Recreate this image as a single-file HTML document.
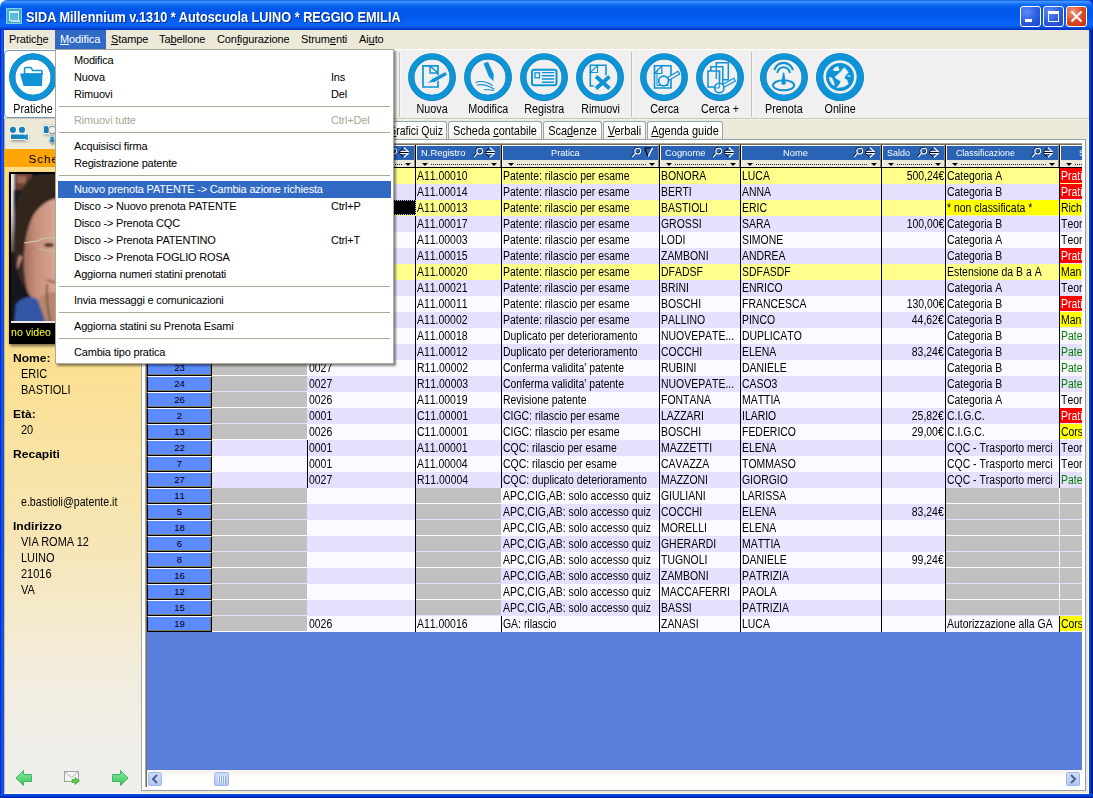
<!DOCTYPE html>
<html lang="it"><head><meta charset="utf-8"><title>SIDA Millennium</title>
<style>
*{box-sizing:border-box;margin:0;padding:0}
html,body{width:1093px;height:798px;overflow:hidden}
body{position:relative;background:#ece9d8;font-family:"Liberation Sans",sans-serif;font-size:11px;color:#000}
.abs{position:absolute}
/* window frame */
#frameL{left:0;top:30px;width:4px;height:768px;background:linear-gradient(90deg,#0019cf 0,#0831d9 1px,#166aee 2px,#0855dd 3px,#0540d8 4px)}
#frameR{left:1089px;top:30px;width:4px;height:768px;background:linear-gradient(90deg,#0a44e4 0,#0a3fe0 1px,#0530c8 2px,#001a98 3px,#001590 4px)}
#frameB{left:0;top:794px;width:1093px;height:4px;background:linear-gradient(180deg,#0540d8 0,#0855dd 1px,#0037d5 2px,#001ea0 4px)}
#title{left:0;top:0;width:1093px;height:30px;border-radius:7px 7px 0 0;
 background:linear-gradient(180deg,#0a55dd 0,#3f94ff 1.500px,#3088fc 2.500px,#1672f6 4px,#0a62f0 6px,#0058ea 9px,#0056e8 15px,#0860f4 21px,#0a65fa 25px,#0858ea 27px,#0440d0 28.500px,#0030bc 30px)}
#title .txt{left:26px;top:9px;color:#fff;font-weight:bold;font-size:14px;line-height:16px;white-space:nowrap;text-shadow:1px 1px 0 #0a2a80;transform:scaleX(.908);transform-origin:0 50%}
.tb{top:6px;width:21px;height:21px;border:1px solid #fff;border-radius:3px;background:radial-gradient(circle at 30% 25%,#5d8df5 0,#2b5be0 55%,#1c45c8 100%)}
.tb.x{background:radial-gradient(circle at 30% 25%,#f09a7c 0,#dc4a27 50%,#c22f10 100%)}
/* menubar */
#menubar{left:4px;top:30px;width:1085px;height:19px;background:#ece9d8}
.mi{position:absolute;top:0;height:19px;line-height:18px;font-size:11px;white-space:nowrap;letter-spacing:-0.1px}
.mi u{text-decoration:underline}
/* toolbar */
#toolbar{left:4px;top:49px;width:1085px;height:70px;background:#f0f0f0;border-top:1px solid #fff}
.ic{position:absolute;top:54px;width:47px;height:47px;border-radius:50%;border:6px solid #0e93d7;background:#fff;box-shadow:0 1px 0 #0a5f90}
.lbl{position:absolute;top:102px;width:70px;text-align:center;font-size:12.5px;line-height:14px;white-space:nowrap}
.lbl span{display:inline-block;transform:scaleX(.86)}
.sep{position:absolute;top:52px;width:2px;height:65px;border-left:1px solid #c5c2b0;border-right:1px solid #f8f8f8}
/* tabs */
.tab{position:absolute;top:121px;height:19px;border:1px solid #91a7b4;border-bottom-color:#d0cdc0;border-radius:3px 3px 0 0;background:linear-gradient(180deg,#fff 0,#fcfcfa 60%,#eeede4 100%);font-size:12.5px;line-height:17px;text-align:center;white-space:nowrap}
.tab span{position:absolute;left:-40px;right:-40px;top:1px;text-align:center;transform:scaleX(.875)}
/* grid */
#grid{left:147px;top:145px;width:935px;height:625px;background:#5a7edc;overflow:hidden}
.row{position:absolute;left:0;width:935px;height:16px}
.rh{position:absolute;left:0;top:0;width:65px;height:16px;background:#5b8bff;border:1px solid #000;border-top-color:#fff;border-left-color:#000;text-align:center;font-size:9.5px;line-height:13px;font-kerning:none;box-shadow:inset -1px -1px 0 #807860}
.c{position:absolute;top:0;height:16px;overflow:hidden;white-space:nowrap;font-size:12px;line-height:16px;padding-left:1px;font-kerning:none}
.c span{display:inline-block;transform:scaleX(.87);transform-origin:0 50%}
.c.r{text-align:right;padding:0 1px 0 0}
.c.r span{transform-origin:100% 50%}
.c.w{color:#fff}
.c.g{color:#008000}
.vs{position:absolute;top:0;width:1px;height:16px;background:#000}
.hc{position:absolute;top:0;height:22px}
.hc .bl{position:absolute;left:0;right:0;top:0;height:16px;background:#2a62b6;border-top:1px solid #fff;border-left:1px solid #fff;border-right:1px solid #8a8a80;color:#fff;font-size:9.7px;line-height:13px;white-space:nowrap;overflow:hidden}
.hc .fl{position:absolute;left:0;right:0;top:15px;height:7px;background:#ece9d8;border-left:1px solid #fff;border-right:1px solid #8a8a80}
.hc .fl:before{content:"";position:absolute;left:5px;top:3px;border:3px solid transparent;border-top:3px solid #000;border-bottom:0}
.hc .fl:after{content:"";position:absolute;right:3px;top:3px;border:3px solid transparent;border-top:3px solid #000;border-bottom:0}
.hc .dots{position:absolute;left:15px;right:13px;top:19px;height:1px;background:repeating-linear-gradient(90deg,#222 0,#222 1px,transparent 1px,transparent 2px)}
.hi{position:absolute;top:1px}
.mt{font-size:11px;line-height:17px;white-space:nowrap;letter-spacing:-0.19px}
.hv{position:absolute;top:0;width:1px;height:23px;background:#000}
</style></head><body>
<!-- title bar -->
<div class="abs" style="left:0;top:0;width:8px;height:8px;background:#fff"></div><div class="abs" style="left:1085px;top:0;width:8px;height:8px;background:#0831c8"></div>
<div id="title" class="abs">
 <div class="abs" style="left:6px;top:8px;width:16px;height:16px;background:#3fa8d0;border:1px solid #7fcce4"><div class="abs" style="left:2px;top:2px;width:10px;height:10px;border:1px solid #d8f0f8;border-top-width:2px;background:#5cbbdc"></div><div class="abs" style="left:4px;top:11px;width:9px;height:2px;background:#bfe6f2"></div></div>
 <div class="abs txt">SIDA Millennium v.1310 * Autoscuola LUINO * REGGIO EMILIA</div>
 <div class="abs tb" style="left:1020px"><div class="abs" style="left:4px;top:12px;width:7px;height:3px;background:#fff"></div></div>
 <div class="abs tb" style="left:1043px"><div class="abs" style="left:4px;top:4px;width:11px;height:11px;border:1px solid #fff;border-top-width:3px"></div></div>
 <div class="abs tb x" style="left:1066px"><svg class="abs" style="left:0;top:0" width="19" height="19" viewBox="0 0 19 19"><path d="M4.500 4.500L14.500 14.500M14.500 4.500L4.500 14.500" stroke="#fff" stroke-width="2.2"/></svg></div>
</div>
<div class="abs" style="left:4px;top:793px;width:1085px;height:1px;background:#fff"></div>
<div class="abs" style="left:1088px;top:30px;width:1px;height:764px;background:#fff"></div>
<div id="frameL" class="abs"></div><div id="frameR" class="abs"></div><div id="frameB" class="abs"></div>

<!-- menubar -->
<div id="menubar" class="abs">
 <span class="mi" style="left:5px">Pratic<u>h</u>e</span>
 <span class="mi" style="left:51px;width:51px;background:#316ac5;color:#fff;padding-left:5px"><u>M</u>odifica</span>
 <span class="mi" style="left:107px"><u>S</u>tampe</span>
 <span class="mi" style="left:155px">Ta<u>b</u>ellone</span>
 <span class="mi" style="left:213px">Con<u>f</u>igurazione</span>
 <span class="mi" style="left:297px">Strum<u>e</u>nti</span>
 <span class="mi" style="left:355px">Ai<u>u</u>to</span>
</div>

<!-- toolbar -->
<div id="toolbar" class="abs"></div>
<div class="abs" style="left:4px;top:118px;width:1085px;height:3px;background:linear-gradient(180deg,#cbc8b8 0,#cbc8b8 1px,#f2f0e6 1px,#f2f0e6 2px,#ece9d8 2px)"></div>
<div class="abs" style="left:4px;top:50px;width:56px;height:68px;background:#fff;border:1px solid #7a98af;border-radius:4px"></div>
<svg class="abs" style="left:9.100000000000001px;top:52.9px" width="48" height="49" viewBox="0 0 48 49"><circle cx="24" cy="24.300" r="20.700" fill="none" stroke="#0a5c8c" stroke-width="6"/><circle cx="24" cy="24" r="20.700" fill="none" stroke="#0e93d7" stroke-width="6"/><path d="M15.5 21V16Q15.5 14.500 17 14.500H21Q22.3 14.500 22.800 15.800L23.500 17.500H32Q33 17.500 33 18.500V21Z" fill="#fff" stroke="#0e93d7" stroke-width="1.5"/><path d="M11 20.500H33.500L33 33H14.500Z" fill="#0e93d7"/></svg><div class="lbl" style="left:-1.8999999999999986px"><span>Pratiche</span></div>
<svg class="abs" style="left:408.1px;top:52.9px" width="48" height="49" viewBox="0 0 48 49"><circle cx="24" cy="24.300" r="20.700" fill="none" stroke="#0a5c8c" stroke-width="6"/><circle cx="24" cy="24" r="20.700" fill="none" stroke="#0e93d7" stroke-width="6"/><path d="M15 12.800H30V34H15Z" fill="none" stroke="#0e93d7" stroke-width="1.7"/><path d="M22 12.800V20H30M22.500 13.500L29.500 19.500" fill="none" stroke="#0e93d7" stroke-width="1.5"/><path d="M19 30.300L24.500 25.300L37.500 18.500L39.500 22L26.500 29.500Z" fill="#0e93d7" stroke="#f0f0f0" stroke-width="1"/></svg><div class="lbl" style="left:397.1px"><span>Nuova</span></div>
<svg class="abs" style="left:464.1px;top:52.9px" width="48" height="49" viewBox="0 0 48 49"><circle cx="24" cy="24.300" r="20.700" fill="none" stroke="#0a5c8c" stroke-width="6"/><circle cx="24" cy="24" r="20.700" fill="none" stroke="#0e93d7" stroke-width="6"/><path d="M19.500 10.500L24 8.800L29.800 21.500L29.300 28.300L24.800 23.500Z" fill="#0e93d7"/><path d="M11.500 29.500Q17 27.500 22.500 29.500T28.500 33M13 32Q20 31 25 33.500T30.500 36M20 36.500Q25 36.500 30 37.500" stroke="#0e93d7" stroke-width="1.2" fill="none"/></svg><div class="lbl" style="left:453.1px"><span>Modifica</span></div>
<svg class="abs" style="left:520.1px;top:52.9px" width="48" height="49" viewBox="0 0 48 49"><circle cx="24" cy="24.300" r="20.700" fill="none" stroke="#0a5c8c" stroke-width="6"/><circle cx="24" cy="24" r="20.700" fill="none" stroke="#0e93d7" stroke-width="6"/><rect x="12" y="16.800" width="24.500" height="15.400" rx="2.200" fill="none" stroke="#0e93d7" stroke-width="2"/><rect x="15" y="19.800" width="4.500" height="5" fill="none" stroke="#0e93d7" stroke-width="1.300"/><path d="M21.800 19.600H34.200M21.800 22.800H34.200M21.800 26H34.200M21.800 29.200H34.200" stroke="#0e93d7" stroke-width="1.400"/></svg><div class="lbl" style="left:509.1px"><span>Registra</span></div>
<svg class="abs" style="left:576.3px;top:52.9px" width="48" height="49" viewBox="0 0 48 49"><circle cx="24" cy="24.300" r="20.700" fill="none" stroke="#0a5c8c" stroke-width="6"/><circle cx="24" cy="24" r="20.700" fill="none" stroke="#0e93d7" stroke-width="6"/><path d="M14.300 12.300H30V33H14.300Z" fill="none" stroke="#0e93d7" stroke-width="1.600"/><path d="M21.500 12.300L14.300 19.500H21.500Z" fill="none" stroke="#0e93d7" stroke-width="1.200"/><path d="M19.500 23.500L33.500 35.500M33.500 23.500L19.500 35.500" stroke="#f0f0f0" stroke-width="6.500"/><path d="M20 23.500L33.500 35.500M33.500 23.500L20 35.500" stroke="#0e93d7" stroke-width="3.800"/></svg><div class="lbl" style="left:565.3px"><span>Rimuovi</span></div>
<svg class="abs" style="left:640.2px;top:52.9px" width="48" height="49" viewBox="0 0 48 49"><circle cx="24" cy="24.300" r="20.700" fill="none" stroke="#0a5c8c" stroke-width="6"/><circle cx="24" cy="24" r="20.700" fill="none" stroke="#0e93d7" stroke-width="6"/><path d="M14.500 12.800H31V35H14.500Z" fill="none" stroke="#0e93d7" stroke-width="1.600"/><path d="M21.800 12.800L14.500 20.500H21.800Z" fill="none" stroke="#0e93d7" stroke-width="1.200"/><path d="M17 17.500V32.500H28.500" fill="none" stroke="#0e93d7" stroke-width="1"/><path d="M27.500 24.500L38 18.300L39.600 21L29 27.200Z" fill="#f0f0f0" stroke="#0e93d7" stroke-width="1.300"/><circle cx="23.600" cy="28" r="4.900" fill="#f0f0f0" stroke="#0e93d7" stroke-width="1.700"/></svg><div class="lbl" style="left:629.2px"><span>Cerca</span></div>
<svg class="abs" style="left:696.3px;top:52.9px" width="48" height="49" viewBox="0 0 48 49"><circle cx="24" cy="24.300" r="20.700" fill="none" stroke="#0a5c8c" stroke-width="6"/><circle cx="24" cy="24" r="20.700" fill="none" stroke="#0e93d7" stroke-width="6"/><path d="M20.300 9.800H32.300V26.800H20.300Z" fill="#f0f0f0" stroke="#0e93d7" stroke-width="1.500"/><path d="M14.800 13.700H26.800V31H14.800Z" fill="#f0f0f0" stroke="#0e93d7" stroke-width="1.500"/><path d="M12 18H23.500V34H12Z" fill="#f0f0f0" stroke="#0e93d7" stroke-width="1.500"/><path d="M20.300 13.700V26M23.500 18V27" stroke="#0e93d7" stroke-width="1.300"/><path d="M26.500 31.500L37.800 25.300L39.300 28L28 34.200Z" fill="#f0f0f0" stroke="#0e93d7" stroke-width="1.300"/><circle cx="23.300" cy="35" r="4.700" fill="#f0f0f0" stroke="#0e93d7" stroke-width="1.600"/><path d="M23.300 30.500V35H19" stroke="#0e93d7" stroke-width="1" fill="none"/></svg><div class="lbl" style="left:685.3px"><span>Cerca +</span></div>
<svg class="abs" style="left:760.2px;top:52.9px" width="48" height="49" viewBox="0 0 48 49"><circle cx="24" cy="24.300" r="20.700" fill="none" stroke="#0a5c8c" stroke-width="6"/><circle cx="24" cy="24" r="20.700" fill="none" stroke="#0e93d7" stroke-width="6"/><path d="M14.300 17Q17 9.800 23.600 9.800T33 17" fill="none" stroke="#0e93d7" stroke-width="2.200"/><path d="M17.300 20Q18.500 14.200 23.600 14.200T30 20" fill="none" stroke="#0e93d7" stroke-width="2"/><ellipse cx="23.600" cy="32.300" rx="10.600" ry="5" fill="none" stroke="#0e93d7" stroke-width="2"/><path d="M23 19.500H24.200L26 31Q23.600 32.500 21.200 31Z" fill="#0e93d7"/></svg><div class="lbl" style="left:749.2px"><span>Prenota</span></div>
<svg class="abs" style="left:816.3px;top:52.9px" width="48" height="49" viewBox="0 0 48 49"><circle cx="24" cy="24.300" r="20.700" fill="none" stroke="#0a5c8c" stroke-width="6"/><circle cx="24" cy="24" r="20.700" fill="none" stroke="#0e93d7" stroke-width="6"/><circle cx="24" cy="24" r="20.200" fill="#f0f0f0" stroke="#0e93d7" stroke-width="7.100"/><circle cx="24" cy="24" r="14" fill="#0e93d7"/><path d="M18.800 24.200L24.200 19.400L28.200 14.700L30.900 17.400L32.300 19.400L29.600 22.100L28.200 25.500L30.900 26.900L32.300 30.900L28.200 33.600L20.800 34.700L24.200 30.300L24.800 28.200L21.500 26.200Z" fill="#f2f2f2" stroke="#f2f2f2" stroke-width=".6" stroke-linejoin="round"/><path d="M16.700 16.700L19.400 14L22.100 13.300L23.500 17.400L20.800 18.100L18.100 18.100Z" fill="#f2f2f2"/><path d="M13 23.800L16 24.800L18.100 28.900L18.800 33L16 31.600L13.700 27.600Z" fill="#f2f2f2"/><path d="M31.300 22.100L34.700 22.800L34.700 23.800L31.600 23.200Z" fill="#f2f2f2"/></svg><div class="lbl" style="left:805.3px"><span>Online</span></div>
<div class="sep" style="left:399px"></div>
<div class="sep" style="left:631px"></div>
<div class="sep" style="left:751px"></div>

<!-- tabs -->
<div class="tab" style="left:384px;width:63px"><span style="transform:scaleX(.84)"><u>G</u>rafici Quiz</span></div>
<div class="tab" style="left:448px;width:94px"><span>Scheda <u>c</u>ontabile</span></div>
<div class="tab" style="left:543px;width:59px"><span>Sca<u>d</u>enze</span></div>
<div class="tab" style="left:603px;width:43px"><span><u>V</u>erbali</span></div>
<div class="tab" style="left:647px;width:76px"><span><u>A</u>genda guide</span></div>

<!-- left panel -->
<div class="abs" style="left:4px;top:119px;width:137px;height:30px;background:#ece9d8;border-left:1px solid #aaa798"></div>
<svg class="abs" style="left:6px;top:122px" width="28" height="24" viewBox="6 122 28 24"><defs><filter id="cg" x="-20%" y="-20%" width="140%" height="150%"><feGaussianBlur stdDeviation=".8"/></filter><linearGradient id="cb" x1="0" y1="0" x2="1" y2="0"><stop offset="0" stop-color="#1e7aae"/><stop offset="1" stop-color="#0e90cc"/></linearGradient></defs><g filter="url(#cg)" opacity=".55"><rect x="11.500" y="136" width="17" height="5.500" fill="#555"/></g><g fill="#f4f4f2" stroke="#f4f4f2" stroke-width="2.200" stroke-linejoin="round"><circle cx="13" cy="129.800" r="3.100"/><circle cx="22" cy="129.800" r="3.100"/><path d="M11 134.400H24.500L27.800 133.900V140.500L24.500 139H11Z"/></g><g fill="url(#cb)"><circle cx="13" cy="129.800" r="3.100"/><circle cx="22" cy="129.800" r="3.100"/><path d="M11 134.400H24.500V135.200L27.800 133.900V140.500L24.500 138.600V139H11Z"/></g></svg>
<svg class="abs" style="left:40px;top:122px" width="20" height="24" viewBox="40 122 20 24"><g filter="url(#cg)" opacity=".5"><path d="M50 138H55V141H57L53 145.500L48.500 141H50Z" fill="#444"/><rect x="44" y="133" width="14" height="2.500" fill="#555"/></g><rect x="43" y="124.800" width="16" height="9.600" fill="#f2f6f8" stroke="#b8d4e2" stroke-width=".8"/><rect x="44" y="126.200" width="4.200" height="6.800" fill="#1a7cb4"/><circle cx="52.200" cy="130" r="3.700" fill="#f0f0ee" stroke="#8a8a8a" stroke-width="1.100"/><path d="M50.200 136.500H54V140H55.500L52 143.300L48.500 140H50.200Z" fill="#1886c2" stroke="#e8f0f4" stroke-width=".5"/></svg>
<div class="abs" style="left:4px;top:149px;width:137px;height:18px;background:#ffa50a;font-size:11.5px;line-height:21px;padding-left:24.5px;letter-spacing:1.1px">Scheda</div>
<div class="abs" style="left:4px;top:167px;width:137px;height:626px;border-left:1px solid rgba(130,105,40,.35);background:linear-gradient(180deg,#fdde86 0,#fbdf90 30%,#f6e6b6 60%,#f2ecdc 80%,#f0eee8 92%,#efefec 100%)"></div>
<div class="abs" style="left:9px;top:172px;width:120px;height:172px;background:#000;box-shadow:1px 2px 3px rgba(0,0,0,.55)"></div>
<svg class="abs" style="left:11px;top:174px" width="116" height="147" viewBox="0 0 116 147"><defs><filter id="bl" x="-10%" y="-10%" width="120%" height="120%"><feGaussianBlur stdDeviation="1.3"/></filter><linearGradient id="sky" x1="0" y1="0" x2="0" y2="1"><stop offset="0" stop-color="#f4f4f8"/><stop offset=".5" stop-color="#d8d4da"/><stop offset="1" stop-color="#5a5058"/></linearGradient><linearGradient id="skin" x1="0" y1="0" x2="1" y2="0"><stop offset="0" stop-color="#a06c5a"/><stop offset=".12" stop-color="#c48e7a"/><stop offset=".3" stop-color="#d8a694"/><stop offset="1" stop-color="#ddb09a"/></linearGradient></defs><rect width="116" height="147" fill="#1d1a22"/><g filter="url(#bl)"><rect x="-2" y="-2" width="5" height="80" fill="url(#sky)"/><rect x="3" y="-2" width="18" height="18" fill="#6d4034"/><rect x="6" y="2" width="9" height="7" fill="#a06a5a"/><path d="M12 60C14 44 24 30 44 22H118V150H36C26 138 14 120 12 98Z" fill="url(#skin)"/><path d="M6 82C9 79 14 82 14 93C14 104 13 112 10 112C6 109 4 88 6 82Z" fill="#bd8874"/><path d="M20 4C40 -4 80 -2 118 6V24H50C38 24 28 32 22 42C17 52 14 64 13 80C10 77 6 81 6 96C2 88 2 60 4 40C6 24 12 10 20 4Z" fill="#30261f"/><path d="M13 80C13 92 13 104 16 116C12 112 8 104 6 96Z" fill="#3a2a26"/><path d="M-2 94H6C9 108 17 122 29 132L36 150H-2Z" fill="#14151f"/><path d="M5 130C11 124 19 120 27 126L35 150H3Z" fill="#3556a6"/><path d="M27 126C31 120 37 118 46 118V150H35Z" fill="#b8866e"/><path d="M36 110C35 122 36 134 40 150" stroke="#6a4438" stroke-width="1.600" fill="none"/><path d="M36 106Q42 109 50 108" stroke="#8a4a40" stroke-width="1.800" fill="none"/><ellipse cx="38" cy="71" rx="5" ry="2" fill="#3a2a22"/></g><path d="M13 69L26 67" stroke="#d8d8c8" stroke-width="1" fill="none" opacity=".9"/><path d="M26 67Q36 62 48 64" stroke="#c8c898" stroke-width="1.6" fill="none" opacity=".9"/><path d="M27 74Q36 79 48 76" stroke="#c8c8a0" stroke-width="1" fill="none" opacity=".7"/></svg>
<div class="abs" style="left:11px;top:321px;width:116px;height:2px;background:#e8e8e8"></div>
<div class="abs" style="left:11px;top:324px;width:60px;height:16px;color:#ffff30;font-size:11.5px;line-height:16px;transform:scaleX(.92);transform-origin:0 50%">no video</div>
<div class="abs" style="left:13px;top:351px;font-weight:bold;font-size:11.5px;line-height:14px;white-space:nowrap;transform:scaleX(1.05);transform-origin:0 50%">Nome:</div>
<div class="abs" style="left:21px;top:367px;font-size:12.5px;line-height:14px;white-space:nowrap;transform:scaleX(0.88);transform-origin:0 50%">ERIC</div>
<div class="abs" style="left:21px;top:383px;font-size:12.5px;line-height:14px;white-space:nowrap;transform:scaleX(0.88);transform-origin:0 50%">BASTIOLI</div>
<div class="abs" style="left:13px;top:407px;font-weight:bold;font-size:11.5px;line-height:14px;white-space:nowrap;transform:scaleX(1.05);transform-origin:0 50%">Età:</div>
<div class="abs" style="left:21px;top:423px;font-size:12.5px;line-height:14px;white-space:nowrap;transform:scaleX(0.88);transform-origin:0 50%">20</div>
<div class="abs" style="left:13px;top:447px;font-weight:bold;font-size:11.5px;line-height:14px;white-space:nowrap;transform:scaleX(1.05);transform-origin:0 50%">Recapiti</div>
<div class="abs" style="left:21px;top:495px;font-size:12.5px;line-height:14px;white-space:nowrap;transform:scaleX(0.85);transform-origin:0 50%">e.bastioli@patente.it</div>
<div class="abs" style="left:13px;top:519px;font-weight:bold;font-size:11.5px;line-height:14px;white-space:nowrap;transform:scaleX(1.05);transform-origin:0 50%">Indirizzo</div>
<div class="abs" style="left:21px;top:535px;font-size:12.5px;line-height:14px;white-space:nowrap;transform:scaleX(0.88);transform-origin:0 50%">VIA ROMA 12</div>
<div class="abs" style="left:21px;top:551px;font-size:12.5px;line-height:14px;white-space:nowrap;transform:scaleX(0.88);transform-origin:0 50%">LUINO</div>
<div class="abs" style="left:21px;top:567px;font-size:12.5px;line-height:14px;white-space:nowrap;transform:scaleX(0.88);transform-origin:0 50%">21016</div>
<div class="abs" style="left:21px;top:583px;font-size:12.5px;line-height:14px;white-space:nowrap;transform:scaleX(0.88);transform-origin:0 50%">VA</div>
<svg class="abs" style="left:15px;top:769px" width="18" height="18" viewBox="0 0 18 18"><defs><linearGradient id="gg" x1="0" y1="0" x2="0" y2="1"><stop offset="0" stop-color="#84ea9c"/><stop offset="1" stop-color="#40c65a"/></linearGradient></defs><path d="M1 9L8.5 1.5V5.5H16.500V12.5H8.5V16.5Z" fill="url(#gg)" stroke="#3cb860" stroke-width="1"/></svg>
<svg class="abs" style="left:111px;top:769px" width="18" height="18" viewBox="0 0 18 18"><path d="M17 9L9.5 1.5V5.5H1.500V12.5H9.5V16.5Z" fill="url(#gg)" stroke="#3cb860" stroke-width="1"/></svg>
<svg class="abs" style="left:63px;top:770px" width="18" height="16" viewBox="0 0 18 16"><rect x="1.5" y="1.500" width="14" height="10" fill="#f4f4f4" stroke="#a0a0a0"/><path d="M1.5 1.500L8.5 7.500L15.500 1.500" fill="none" stroke="#b0b0b0"/><path d="M9 9.500H12V7.500L16.500 11L12 14.500V12.500H9Z" fill="#5ccc3c" stroke="#2a9a2a" stroke-width=".6"/></svg>

<!-- grid frame -->
<div class="abs" style="left:141px;top:139px;width:945px;height:652px;background:#fff;border:1px solid #959e9e;border-top-color:#9aa6ac;border-left-color:#aaa89a"></div>
<div class="abs" style="left:145px;top:143px;width:937px;height:644px;border-left:1px solid #aca899;border-top:1px solid #aca899;background:#fff"></div>
<div class="abs" style="left:146px;top:144px;width:936px;height:643px;border-left:1px solid #716f64;border-top:1px solid #716f64;background:#fff"></div>
<div id="grid" class="abs">
<div class="hc" style="left:0px;width:65px"><div class="bl" style=""></div><div class="fl"></div><div class="dots"></div></div>
<i class="hv" style="left:65px"></i>
<div class="hc" style="left:65px;width:95px"><div class="bl" style=""><svg class="hi" style="right:16px" width="11" height="11" viewBox="0 0 11 11"><g fill="none" stroke="#000" stroke-width="1"><circle cx="5.9" cy="3.4" r="2.9"/><path d="M3.8 5.4L0.4 9.4"/></g><g fill="none" stroke="#fff" stroke-width="1.1"><circle cx="6.7" cy="4.1" r="2.9"/><path d="M4.6 6.2L1.2 10.2"/></g></svg><svg class="hi" style="right:5px" width="10" height="11" viewBox="0 0 10 11"><path d="M0.5 4.5L4.7 0.5M0.3 5.5H9.300M0.5 6.5L4.7 10.5" stroke="#000" stroke-width="1" fill="none"/><path d="M4.8 0.5L9.3 4.500H1.5M1.200 6.5H9.3L4.800 10.5" stroke="#fff" stroke-width="1.1" fill="none"/></svg></div><div class="fl"></div><div class="dots"></div></div>
<i class="hv" style="left:160px"></i>
<div class="hc" style="left:161px;width:107px"><div class="bl" style=""><svg class="hi" style="right:16px" width="11" height="11" viewBox="0 0 11 11"><g fill="none" stroke="#000" stroke-width="1"><circle cx="5.9" cy="3.4" r="2.9"/><path d="M3.8 5.4L0.4 9.4"/></g><g fill="none" stroke="#fff" stroke-width="1.1"><circle cx="6.7" cy="4.1" r="2.9"/><path d="M4.6 6.2L1.2 10.2"/></g></svg><svg class="hi" style="right:5px" width="10" height="11" viewBox="0 0 10 11"><path d="M0.5 4.5L4.7 0.5M0.3 5.5H9.300M0.5 6.5L4.7 10.5" stroke="#000" stroke-width="1" fill="none"/><path d="M4.8 0.5L9.3 4.500H1.5M1.200 6.5H9.3L4.800 10.5" stroke="#fff" stroke-width="1.1" fill="none"/></svg></div><div class="fl"></div><div class="dots"></div></div>
<i class="hv" style="left:268px"></i>
<div class="hc" style="left:269px;width:85px"><div class="bl" style=""><span style="position:absolute;left:4.4px;top:0;transform:scaleX(0.97);transform-origin:0 50%">N.Registro</span><svg class="hi" style="right:16px" width="11" height="11" viewBox="0 0 11 11"><g fill="none" stroke="#000" stroke-width="1"><circle cx="5.9" cy="3.4" r="2.9"/><path d="M3.8 5.4L0.4 9.4"/></g><g fill="none" stroke="#fff" stroke-width="1.1"><circle cx="6.7" cy="4.1" r="2.9"/><path d="M4.6 6.2L1.2 10.2"/></g></svg><svg class="hi" style="right:5px" width="10" height="11" viewBox="0 0 10 11"><path d="M0.5 4.5L4.7 0.5M0.3 5.5H9.300M0.5 6.5L4.7 10.5" stroke="#000" stroke-width="1" fill="none"/><path d="M4.8 0.5L9.3 4.500H1.5M1.200 6.5H9.3L4.800 10.5" stroke="#fff" stroke-width="1.1" fill="none"/></svg></div><div class="fl"></div><div class="dots"></div></div>
<i class="hv" style="left:354px"></i>
<div class="hc" style="left:355px;width:157px"><div class="bl" style=""><span style="position:absolute;left:48.3px;top:0;transform:scaleX(0.95);transform-origin:0 50%">Pratica</span><svg class="hi" style="right:16px" width="11" height="11" viewBox="0 0 11 11"><g fill="none" stroke="#000" stroke-width="1"><circle cx="5.9" cy="3.4" r="2.9"/><path d="M3.8 5.4L0.4 9.4"/></g><g fill="none" stroke="#fff" stroke-width="1.1"><circle cx="6.7" cy="4.1" r="2.9"/><path d="M4.6 6.2L1.2 10.2"/></g></svg><svg class="hi" style="right:5px" width="10" height="11" viewBox="0 0 10 11"><path d="M1.500 1H9M1.800 1L4.800 9.300" stroke="#000" stroke-width="1.200" fill="none"/><path d="M9.500 0.800L5.300 9.500" stroke="#fff" stroke-width="1.300" fill="none"/></svg></div><div class="fl"></div><div class="dots"></div></div>
<i class="hv" style="left:512px"></i>
<div class="hc" style="left:513px;width:80px"><div class="bl" style=""><span style="position:absolute;left:4.2px;top:0;transform:scaleX(0.96);transform-origin:0 50%">Cognome</span><svg class="hi" style="right:16px" width="11" height="11" viewBox="0 0 11 11"><g fill="none" stroke="#000" stroke-width="1"><circle cx="5.9" cy="3.4" r="2.9"/><path d="M3.8 5.4L0.4 9.4"/></g><g fill="none" stroke="#fff" stroke-width="1.1"><circle cx="6.7" cy="4.1" r="2.9"/><path d="M4.6 6.2L1.2 10.2"/></g></svg><svg class="hi" style="right:5px" width="10" height="11" viewBox="0 0 10 11"><path d="M0.5 4.5L4.7 0.5M0.3 5.5H9.300M0.5 6.5L4.7 10.5" stroke="#000" stroke-width="1" fill="none"/><path d="M4.8 0.5L9.3 4.500H1.5M1.200 6.5H9.3L4.800 10.5" stroke="#fff" stroke-width="1.1" fill="none"/></svg></div><div class="fl"></div><div class="dots"></div></div>
<i class="hv" style="left:593px"></i>
<div class="hc" style="left:594px;width:140px"><div class="bl" style=""><span style="position:absolute;left:41.3px;top:0;transform:scaleX(0.96);transform-origin:0 50%">Nome</span><svg class="hi" style="right:16px" width="11" height="11" viewBox="0 0 11 11"><g fill="none" stroke="#000" stroke-width="1"><circle cx="5.9" cy="3.4" r="2.9"/><path d="M3.8 5.4L0.4 9.4"/></g><g fill="none" stroke="#fff" stroke-width="1.1"><circle cx="6.7" cy="4.1" r="2.9"/><path d="M4.6 6.2L1.2 10.2"/></g></svg><svg class="hi" style="right:5px" width="10" height="11" viewBox="0 0 10 11"><path d="M0.5 4.5L4.7 0.5M0.3 5.5H9.300M0.5 6.5L4.7 10.5" stroke="#000" stroke-width="1" fill="none"/><path d="M4.8 0.5L9.3 4.500H1.5M1.200 6.5H9.3L4.800 10.5" stroke="#fff" stroke-width="1.1" fill="none"/></svg></div><div class="fl"></div><div class="dots"></div></div>
<i class="hv" style="left:734px"></i>
<div class="hc" style="left:735px;width:63px"><div class="bl" style=""><span style="position:absolute;left:4.0px;top:0;transform:scaleX(0.93);transform-origin:0 50%">Saldo</span><svg class="hi" style="right:16px" width="11" height="11" viewBox="0 0 11 11"><g fill="none" stroke="#000" stroke-width="1"><circle cx="5.9" cy="3.4" r="2.9"/><path d="M3.8 5.4L0.4 9.4"/></g><g fill="none" stroke="#fff" stroke-width="1.1"><circle cx="6.7" cy="4.1" r="2.9"/><path d="M4.6 6.2L1.2 10.2"/></g></svg><svg class="hi" style="right:5px" width="10" height="11" viewBox="0 0 10 11"><path d="M0.5 4.5L4.7 0.5M0.3 5.5H9.300M0.5 6.5L4.7 10.5" stroke="#000" stroke-width="1" fill="none"/><path d="M4.8 0.5L9.3 4.500H1.5M1.200 6.5H9.3L4.800 10.5" stroke="#fff" stroke-width="1.1" fill="none"/></svg></div><div class="fl"></div><div class="dots"></div></div>
<i class="hv" style="left:798px"></i>
<div class="hc" style="left:799px;width:113px"><div class="bl" style=""><span style="position:absolute;left:9.0px;top:0;transform:scaleX(0.91);transform-origin:0 50%">Classificazione</span><svg class="hi" style="right:16px" width="11" height="11" viewBox="0 0 11 11"><g fill="none" stroke="#000" stroke-width="1"><circle cx="5.9" cy="3.4" r="2.9"/><path d="M3.8 5.4L0.4 9.4"/></g><g fill="none" stroke="#fff" stroke-width="1.1"><circle cx="6.7" cy="4.1" r="2.9"/><path d="M4.6 6.2L1.2 10.2"/></g></svg><svg class="hi" style="right:5px" width="10" height="11" viewBox="0 0 10 11"><path d="M0.5 4.5L4.7 0.5M0.3 5.5H9.300M0.5 6.5L4.7 10.5" stroke="#000" stroke-width="1" fill="none"/><path d="M4.8 0.5L9.3 4.500H1.5M1.200 6.5H9.3L4.800 10.5" stroke="#fff" stroke-width="1.1" fill="none"/></svg></div><div class="fl"></div><div class="dots"></div></div>
<i class="hv" style="left:912px"></i>
<div class="hc" style="left:913px;width:100px"><div class="bl" style=""><span style="position:absolute;left:18.0px;top:0;transform:scaleX(0.95);transform-origin:0 50%">S</span></div><div class="fl"></div><div class="dots"></div></div>
<i class="hv" style="left:1013px"></i>
<div style="position:absolute;left:0;top:22px;width:935px;height:1px;background:#000"></div>
</div>
<div class="abs" style="left:147px;top:0;width:935px;height:798px;overflow:hidden">
<div style="position:absolute;left:0;top:0;width:935px;height:798px">
<div class="row" style="top:168px;background:#ffff8c">
<div class="rh"><span></span></div>
<div class="c " style="left:65px;width:95px;background:#c0c0c0;height:15px;"><span></span></div>
<div class="c " style="left:161px;width:107px;"><span></span></div>
<i class="vs" style="left:268px"></i>
<div class="c " style="left:269px;width:85px;"><span>A11.00010</span></div>
<i class="vs" style="left:354px"></i>
<div class="c " style="left:355px;width:157px;"><span>Patente: rilascio per esame</span></div>
<i class="vs" style="left:512px"></i>
<div class="c " style="left:513px;width:80px;"><span>BONORA</span></div>
<i class="vs" style="left:593px"></i>
<div class="c " style="left:594px;width:140px;"><span>LUCA</span></div>
<i class="vs" style="left:734px"></i>
<div class="c r" style="left:735px;width:63px;"><span>500,24€</span></div>
<i class="vs" style="left:798px"></i>
<div class="c " style="left:799px;width:113px;"><span>Categoria A</span></div>
<i class="vs" style="left:912px"></i>
<div class="c w" style="left:913px;width:23px;background:#ff0000;height:15px;"><span>Prati</span></div>
</div>
<div class="row" style="top:184px;background:#e6e0ff">
<div class="rh"><span></span></div>
<div class="c " style="left:65px;width:95px;background:#c0c0c0;height:15px;"><span></span></div>
<div class="c " style="left:161px;width:107px;"><span></span></div>
<i class="vs" style="left:268px"></i>
<div class="c " style="left:269px;width:85px;"><span>A11.00014</span></div>
<i class="vs" style="left:354px"></i>
<div class="c " style="left:355px;width:157px;"><span>Patente: rilascio per esame</span></div>
<i class="vs" style="left:512px"></i>
<div class="c " style="left:513px;width:80px;"><span>BERTI</span></div>
<i class="vs" style="left:593px"></i>
<div class="c " style="left:594px;width:140px;"><span>ANNA</span></div>
<i class="vs" style="left:734px"></i>
<div class="c r" style="left:735px;width:63px;"><span></span></div>
<i class="vs" style="left:798px"></i>
<div class="c " style="left:799px;width:113px;"><span>Categoria B</span></div>
<i class="vs" style="left:912px"></i>
<div class="c w" style="left:913px;width:23px;background:#ff0000;height:15px;"><span>Prati</span></div>
</div>
<div class="row" style="top:200px;background:#ffff8c">
<div class="rh"><span></span></div>
<div class="c " style="left:65px;width:95px;background:#c0c0c0;height:15px;"><span></span></div>
<div class="c " style="left:161px;width:107px;background:#000;height:15px;width:108px;border:1px dotted #a8bcff;"><span></span></div>
<div class="c " style="left:269px;width:85px;"><span>A11.00013</span></div>
<i class="vs" style="left:354px"></i>
<div class="c " style="left:355px;width:157px;"><span>Patente: rilascio per esame</span></div>
<i class="vs" style="left:512px"></i>
<div class="c " style="left:513px;width:80px;"><span>BASTIOLI</span></div>
<i class="vs" style="left:593px"></i>
<div class="c " style="left:594px;width:140px;"><span>ERIC</span></div>
<i class="vs" style="left:734px"></i>
<div class="c r" style="left:735px;width:63px;"><span></span></div>
<i class="vs" style="left:798px"></i>
<div class="c " style="left:799px;width:113px;background:#ffff00;height:15px;"><span>* non classificata *</span></div>
<i class="vs" style="left:912px"></i>
<div class="c " style="left:913px;width:23px;background:#ffff00;height:15px;"><span>Rich</span></div>
</div>
<div class="row" style="top:216px;background:#e6e0ff">
<div class="rh"><span></span></div>
<div class="c " style="left:65px;width:95px;background:#c0c0c0;height:15px;"><span></span></div>
<div class="c " style="left:161px;width:107px;"><span></span></div>
<i class="vs" style="left:268px"></i>
<div class="c " style="left:269px;width:85px;"><span>A11.00017</span></div>
<i class="vs" style="left:354px"></i>
<div class="c " style="left:355px;width:157px;"><span>Patente: rilascio per esame</span></div>
<i class="vs" style="left:512px"></i>
<div class="c " style="left:513px;width:80px;"><span>GROSSI</span></div>
<i class="vs" style="left:593px"></i>
<div class="c " style="left:594px;width:140px;"><span>SARA</span></div>
<i class="vs" style="left:734px"></i>
<div class="c r" style="left:735px;width:63px;"><span>100,00€</span></div>
<i class="vs" style="left:798px"></i>
<div class="c " style="left:799px;width:113px;"><span>Categoria B</span></div>
<i class="vs" style="left:912px"></i>
<div class="c " style="left:913px;width:23px;"><span>Teor</span></div>
</div>
<div class="row" style="top:232px;background:#fafaff">
<div class="rh"><span></span></div>
<div class="c " style="left:65px;width:95px;background:#c0c0c0;height:15px;"><span></span></div>
<div class="c " style="left:161px;width:107px;"><span></span></div>
<i class="vs" style="left:268px"></i>
<div class="c " style="left:269px;width:85px;"><span>A11.00003</span></div>
<i class="vs" style="left:354px"></i>
<div class="c " style="left:355px;width:157px;"><span>Patente: rilascio per esame</span></div>
<i class="vs" style="left:512px"></i>
<div class="c " style="left:513px;width:80px;"><span>LODI</span></div>
<i class="vs" style="left:593px"></i>
<div class="c " style="left:594px;width:140px;"><span>SIMONE</span></div>
<i class="vs" style="left:734px"></i>
<div class="c r" style="left:735px;width:63px;"><span></span></div>
<i class="vs" style="left:798px"></i>
<div class="c " style="left:799px;width:113px;"><span>Categoria A</span></div>
<i class="vs" style="left:912px"></i>
<div class="c " style="left:913px;width:23px;"><span>Teor</span></div>
</div>
<div class="row" style="top:248px;background:#e6e0ff">
<div class="rh"><span></span></div>
<div class="c " style="left:65px;width:95px;background:#c0c0c0;height:15px;"><span></span></div>
<div class="c " style="left:161px;width:107px;"><span></span></div>
<i class="vs" style="left:268px"></i>
<div class="c " style="left:269px;width:85px;"><span>A11.00015</span></div>
<i class="vs" style="left:354px"></i>
<div class="c " style="left:355px;width:157px;"><span>Patente: rilascio per esame</span></div>
<i class="vs" style="left:512px"></i>
<div class="c " style="left:513px;width:80px;"><span>ZAMBONI</span></div>
<i class="vs" style="left:593px"></i>
<div class="c " style="left:594px;width:140px;"><span>ANDREA</span></div>
<i class="vs" style="left:734px"></i>
<div class="c r" style="left:735px;width:63px;"><span></span></div>
<i class="vs" style="left:798px"></i>
<div class="c " style="left:799px;width:113px;"><span>Categoria B</span></div>
<i class="vs" style="left:912px"></i>
<div class="c w" style="left:913px;width:23px;background:#ff0000;height:15px;"><span>Prati</span></div>
</div>
<div class="row" style="top:264px;background:#ffff8c">
<div class="rh"><span></span></div>
<div class="c " style="left:65px;width:95px;background:#c0c0c0;height:15px;"><span></span></div>
<div class="c " style="left:161px;width:107px;"><span></span></div>
<i class="vs" style="left:268px"></i>
<div class="c " style="left:269px;width:85px;"><span>A11.00020</span></div>
<i class="vs" style="left:354px"></i>
<div class="c " style="left:355px;width:157px;"><span>Patente: rilascio per esame</span></div>
<i class="vs" style="left:512px"></i>
<div class="c " style="left:513px;width:80px;"><span>DFADSF</span></div>
<i class="vs" style="left:593px"></i>
<div class="c " style="left:594px;width:140px;"><span>SDFASDF</span></div>
<i class="vs" style="left:734px"></i>
<div class="c r" style="left:735px;width:63px;"><span></span></div>
<i class="vs" style="left:798px"></i>
<div class="c " style="left:799px;width:113px;"><span>Estensione da B a A</span></div>
<i class="vs" style="left:912px"></i>
<div class="c " style="left:913px;width:23px;background:#ffff00;height:15px;"><span>Man</span></div>
</div>
<div class="row" style="top:280px;background:#e6e0ff">
<div class="rh"><span></span></div>
<div class="c " style="left:65px;width:95px;background:#c0c0c0;height:15px;"><span></span></div>
<div class="c " style="left:161px;width:107px;"><span></span></div>
<i class="vs" style="left:268px"></i>
<div class="c " style="left:269px;width:85px;"><span>A11.00021</span></div>
<i class="vs" style="left:354px"></i>
<div class="c " style="left:355px;width:157px;"><span>Patente: rilascio per esame</span></div>
<i class="vs" style="left:512px"></i>
<div class="c " style="left:513px;width:80px;"><span>BRINI</span></div>
<i class="vs" style="left:593px"></i>
<div class="c " style="left:594px;width:140px;"><span>ENRICO</span></div>
<i class="vs" style="left:734px"></i>
<div class="c r" style="left:735px;width:63px;"><span></span></div>
<i class="vs" style="left:798px"></i>
<div class="c " style="left:799px;width:113px;"><span>Categoria A</span></div>
<i class="vs" style="left:912px"></i>
<div class="c " style="left:913px;width:23px;"><span>Teor</span></div>
</div>
<div class="row" style="top:296px;background:#fafaff">
<div class="rh"><span></span></div>
<div class="c " style="left:65px;width:95px;background:#c0c0c0;height:15px;"><span></span></div>
<div class="c " style="left:161px;width:107px;"><span></span></div>
<i class="vs" style="left:268px"></i>
<div class="c " style="left:269px;width:85px;"><span>A11.00011</span></div>
<i class="vs" style="left:354px"></i>
<div class="c " style="left:355px;width:157px;"><span>Patente: rilascio per esame</span></div>
<i class="vs" style="left:512px"></i>
<div class="c " style="left:513px;width:80px;"><span>BOSCHI</span></div>
<i class="vs" style="left:593px"></i>
<div class="c " style="left:594px;width:140px;"><span>FRANCESCA</span></div>
<i class="vs" style="left:734px"></i>
<div class="c r" style="left:735px;width:63px;"><span>130,00€</span></div>
<i class="vs" style="left:798px"></i>
<div class="c " style="left:799px;width:113px;"><span>Categoria B</span></div>
<i class="vs" style="left:912px"></i>
<div class="c w" style="left:913px;width:23px;background:#ff0000;height:15px;"><span>Prati</span></div>
</div>
<div class="row" style="top:312px;background:#e6e0ff">
<div class="rh"><span></span></div>
<div class="c " style="left:65px;width:95px;background:#c0c0c0;height:15px;"><span></span></div>
<div class="c " style="left:161px;width:107px;"><span></span></div>
<i class="vs" style="left:268px"></i>
<div class="c " style="left:269px;width:85px;"><span>A11.00002</span></div>
<i class="vs" style="left:354px"></i>
<div class="c " style="left:355px;width:157px;"><span>Patente: rilascio per esame</span></div>
<i class="vs" style="left:512px"></i>
<div class="c " style="left:513px;width:80px;"><span>PALLINO</span></div>
<i class="vs" style="left:593px"></i>
<div class="c " style="left:594px;width:140px;"><span>PINCO</span></div>
<i class="vs" style="left:734px"></i>
<div class="c r" style="left:735px;width:63px;"><span>44,62€</span></div>
<i class="vs" style="left:798px"></i>
<div class="c " style="left:799px;width:113px;"><span>Categoria B</span></div>
<i class="vs" style="left:912px"></i>
<div class="c " style="left:913px;width:23px;background:#ffff00;height:15px;"><span>Man</span></div>
</div>
<div class="row" style="top:328px;background:#fafaff">
<div class="rh"><span></span></div>
<div class="c " style="left:65px;width:95px;background:#c0c0c0;height:15px;"><span></span></div>
<div class="c " style="left:161px;width:107px;"><span></span></div>
<i class="vs" style="left:268px"></i>
<div class="c " style="left:269px;width:85px;"><span>A11.00018</span></div>
<i class="vs" style="left:354px"></i>
<div class="c " style="left:355px;width:157px;"><span>Duplicato per deterioramento</span></div>
<i class="vs" style="left:512px"></i>
<div class="c " style="left:513px;width:80px;"><span>NUOVEPATE...</span></div>
<i class="vs" style="left:593px"></i>
<div class="c " style="left:594px;width:140px;"><span>DUPLICATO</span></div>
<i class="vs" style="left:734px"></i>
<div class="c r" style="left:735px;width:63px;"><span></span></div>
<i class="vs" style="left:798px"></i>
<div class="c " style="left:799px;width:113px;"><span>Categoria B</span></div>
<i class="vs" style="left:912px"></i>
<div class="c g" style="left:913px;width:23px;"><span>Pate</span></div>
</div>
<div class="row" style="top:344px;background:#e6e0ff">
<div class="rh"><span></span></div>
<div class="c " style="left:65px;width:95px;background:#c0c0c0;height:15px;"><span></span></div>
<div class="c " style="left:161px;width:107px;"><span></span></div>
<i class="vs" style="left:268px"></i>
<div class="c " style="left:269px;width:85px;"><span>A11.00012</span></div>
<i class="vs" style="left:354px"></i>
<div class="c " style="left:355px;width:157px;"><span>Duplicato per deterioramento</span></div>
<i class="vs" style="left:512px"></i>
<div class="c " style="left:513px;width:80px;"><span>COCCHI</span></div>
<i class="vs" style="left:593px"></i>
<div class="c " style="left:594px;width:140px;"><span>ELENA</span></div>
<i class="vs" style="left:734px"></i>
<div class="c r" style="left:735px;width:63px;"><span>83,24€</span></div>
<i class="vs" style="left:798px"></i>
<div class="c " style="left:799px;width:113px;"><span>Categoria B</span></div>
<i class="vs" style="left:912px"></i>
<div class="c g" style="left:913px;width:23px;"><span>Pate</span></div>
</div>
<div class="row" style="top:360px;background:#fafaff">
<div class="rh"><span>23</span></div>
<div class="c " style="left:65px;width:95px;background:#c0c0c0;height:15px;"><span></span></div>
<div class="c " style="left:161px;width:107px;"><span>0027</span></div>
<i class="vs" style="left:268px"></i>
<div class="c " style="left:269px;width:85px;"><span>R11.00002</span></div>
<i class="vs" style="left:354px"></i>
<div class="c " style="left:355px;width:157px;"><span>Conferma validita' patente</span></div>
<i class="vs" style="left:512px"></i>
<div class="c " style="left:513px;width:80px;"><span>RUBINI</span></div>
<i class="vs" style="left:593px"></i>
<div class="c " style="left:594px;width:140px;"><span>DANIELE</span></div>
<i class="vs" style="left:734px"></i>
<div class="c r" style="left:735px;width:63px;"><span></span></div>
<i class="vs" style="left:798px"></i>
<div class="c " style="left:799px;width:113px;"><span>Categoria B</span></div>
<i class="vs" style="left:912px"></i>
<div class="c g" style="left:913px;width:23px;"><span>Pate</span></div>
</div>
<div class="row" style="top:376px;background:#e6e0ff">
<div class="rh"><span>24</span></div>
<div class="c " style="left:65px;width:95px;background:#c0c0c0;height:15px;"><span></span></div>
<div class="c " style="left:161px;width:107px;"><span>0027</span></div>
<i class="vs" style="left:268px"></i>
<div class="c " style="left:269px;width:85px;"><span>R11.00003</span></div>
<i class="vs" style="left:354px"></i>
<div class="c " style="left:355px;width:157px;"><span>Conferma validita' patente</span></div>
<i class="vs" style="left:512px"></i>
<div class="c " style="left:513px;width:80px;"><span>NUOVEPATE...</span></div>
<i class="vs" style="left:593px"></i>
<div class="c " style="left:594px;width:140px;"><span>CASO3</span></div>
<i class="vs" style="left:734px"></i>
<div class="c r" style="left:735px;width:63px;"><span></span></div>
<i class="vs" style="left:798px"></i>
<div class="c " style="left:799px;width:113px;"><span>Categoria B</span></div>
<i class="vs" style="left:912px"></i>
<div class="c g" style="left:913px;width:23px;"><span>Pate</span></div>
</div>
<div class="row" style="top:392px;background:#fafaff">
<div class="rh"><span>26</span></div>
<div class="c " style="left:65px;width:95px;background:#c0c0c0;height:15px;"><span></span></div>
<div class="c " style="left:161px;width:107px;"><span>0026</span></div>
<i class="vs" style="left:268px"></i>
<div class="c " style="left:269px;width:85px;"><span>A11.00019</span></div>
<i class="vs" style="left:354px"></i>
<div class="c " style="left:355px;width:157px;"><span>Revisione patente</span></div>
<i class="vs" style="left:512px"></i>
<div class="c " style="left:513px;width:80px;"><span>FONTANA</span></div>
<i class="vs" style="left:593px"></i>
<div class="c " style="left:594px;width:140px;"><span>MATTIA</span></div>
<i class="vs" style="left:734px"></i>
<div class="c r" style="left:735px;width:63px;"><span></span></div>
<i class="vs" style="left:798px"></i>
<div class="c " style="left:799px;width:113px;"><span>Categoria A</span></div>
<i class="vs" style="left:912px"></i>
<div class="c " style="left:913px;width:23px;"><span>Teor</span></div>
</div>
<div class="row" style="top:408px;background:#e6e0ff">
<div class="rh"><span>2</span></div>
<div class="c " style="left:65px;width:95px;background:#c0c0c0;height:15px;"><span></span></div>
<div class="c " style="left:161px;width:107px;"><span>0001</span></div>
<i class="vs" style="left:268px"></i>
<div class="c " style="left:269px;width:85px;"><span>C11.00001</span></div>
<i class="vs" style="left:354px"></i>
<div class="c " style="left:355px;width:157px;"><span>CIGC: rilascio per esame</span></div>
<i class="vs" style="left:512px"></i>
<div class="c " style="left:513px;width:80px;"><span>LAZZARI</span></div>
<i class="vs" style="left:593px"></i>
<div class="c " style="left:594px;width:140px;"><span>ILARIO</span></div>
<i class="vs" style="left:734px"></i>
<div class="c r" style="left:735px;width:63px;"><span>25,82€</span></div>
<i class="vs" style="left:798px"></i>
<div class="c " style="left:799px;width:113px;"><span>C.I.G.C.</span></div>
<i class="vs" style="left:912px"></i>
<div class="c w" style="left:913px;width:23px;background:#ff0000;height:15px;"><span>Prati</span></div>
</div>
<div class="row" style="top:424px;background:#fafaff">
<div class="rh"><span>13</span></div>
<div class="c " style="left:65px;width:95px;background:#c0c0c0;height:15px;"><span></span></div>
<div class="c " style="left:161px;width:107px;"><span>0026</span></div>
<i class="vs" style="left:268px"></i>
<div class="c " style="left:269px;width:85px;"><span>C11.00001</span></div>
<i class="vs" style="left:354px"></i>
<div class="c " style="left:355px;width:157px;"><span>CIGC: rilascio per esame</span></div>
<i class="vs" style="left:512px"></i>
<div class="c " style="left:513px;width:80px;"><span>BOSCHI</span></div>
<i class="vs" style="left:593px"></i>
<div class="c " style="left:594px;width:140px;"><span>FEDERICO</span></div>
<i class="vs" style="left:734px"></i>
<div class="c r" style="left:735px;width:63px;"><span>29,00€</span></div>
<i class="vs" style="left:798px"></i>
<div class="c " style="left:799px;width:113px;"><span>C.I.G.C.</span></div>
<i class="vs" style="left:912px"></i>
<div class="c " style="left:913px;width:23px;background:#ffff00;height:15px;"><span>Cors</span></div>
</div>
<div class="row" style="top:440px;background:#e6e0ff">
<div class="rh"><span>22</span></div>
<div class="c " style="left:65px;width:95px;"><span></span></div>
<i class="vs" style="left:160px"></i>
<div class="c " style="left:161px;width:107px;"><span>0001</span></div>
<i class="vs" style="left:268px"></i>
<div class="c " style="left:269px;width:85px;"><span>A11.00001</span></div>
<i class="vs" style="left:354px"></i>
<div class="c " style="left:355px;width:157px;"><span>CQC: rilascio per esame</span></div>
<i class="vs" style="left:512px"></i>
<div class="c " style="left:513px;width:80px;"><span>MAZZETTI</span></div>
<i class="vs" style="left:593px"></i>
<div class="c " style="left:594px;width:140px;"><span>ELENA</span></div>
<i class="vs" style="left:734px"></i>
<div class="c r" style="left:735px;width:63px;"><span></span></div>
<i class="vs" style="left:798px"></i>
<div class="c " style="left:799px;width:113px;"><span>CQC - Trasporto merci</span></div>
<i class="vs" style="left:912px"></i>
<div class="c " style="left:913px;width:23px;"><span>Teor</span></div>
</div>
<div class="row" style="top:456px;background:#fafaff">
<div class="rh"><span>7</span></div>
<div class="c " style="left:65px;width:95px;"><span></span></div>
<i class="vs" style="left:160px"></i>
<div class="c " style="left:161px;width:107px;"><span>0001</span></div>
<i class="vs" style="left:268px"></i>
<div class="c " style="left:269px;width:85px;"><span>A11.00004</span></div>
<i class="vs" style="left:354px"></i>
<div class="c " style="left:355px;width:157px;"><span>CQC: rilascio per esame</span></div>
<i class="vs" style="left:512px"></i>
<div class="c " style="left:513px;width:80px;"><span>CAVAZZA</span></div>
<i class="vs" style="left:593px"></i>
<div class="c " style="left:594px;width:140px;"><span>TOMMASO</span></div>
<i class="vs" style="left:734px"></i>
<div class="c r" style="left:735px;width:63px;"><span></span></div>
<i class="vs" style="left:798px"></i>
<div class="c " style="left:799px;width:113px;"><span>CQC - Trasporto merci</span></div>
<i class="vs" style="left:912px"></i>
<div class="c " style="left:913px;width:23px;"><span>Teor</span></div>
</div>
<div class="row" style="top:472px;background:#e6e0ff">
<div class="rh"><span>27</span></div>
<div class="c " style="left:65px;width:95px;"><span></span></div>
<i class="vs" style="left:160px"></i>
<div class="c " style="left:161px;width:107px;"><span>0027</span></div>
<i class="vs" style="left:268px"></i>
<div class="c " style="left:269px;width:85px;"><span>R11.00004</span></div>
<i class="vs" style="left:354px"></i>
<div class="c " style="left:355px;width:157px;"><span>CQC: duplicato deterioramento</span></div>
<i class="vs" style="left:512px"></i>
<div class="c " style="left:513px;width:80px;"><span>MAZZONI</span></div>
<i class="vs" style="left:593px"></i>
<div class="c " style="left:594px;width:140px;"><span>GIORGIO</span></div>
<i class="vs" style="left:734px"></i>
<div class="c r" style="left:735px;width:63px;"><span></span></div>
<i class="vs" style="left:798px"></i>
<div class="c " style="left:799px;width:113px;"><span>CQC - Trasporto merci</span></div>
<i class="vs" style="left:912px"></i>
<div class="c g" style="left:913px;width:23px;"><span>Pate</span></div>
</div>
<div class="row" style="top:488px;background:#fafaff">
<div class="rh"><span>11</span></div>
<div class="c " style="left:65px;width:95px;background:#c0c0c0;height:15px;"><span></span></div>
<div class="c " style="left:161px;width:107px;"><span></span></div>
<i class="vs" style="left:268px"></i>
<div class="c " style="left:269px;width:85px;background:#c0c0c0;height:15px;"><span></span></div>
<div class="c " style="left:355px;width:157px;"><span>APC,CIG,AB: solo accesso quiz</span></div>
<i class="vs" style="left:512px"></i>
<div class="c " style="left:513px;width:80px;"><span>GIULIANI</span></div>
<i class="vs" style="left:593px"></i>
<div class="c " style="left:594px;width:140px;"><span>LARISSA</span></div>
<i class="vs" style="left:734px"></i>
<div class="c r" style="left:735px;width:63px;"><span></span></div>
<i class="vs" style="left:798px"></i>
<div class="c " style="left:799px;width:113px;background:#c0c0c0;height:15px;"><span></span></div>
<div class="c " style="left:913px;width:23px;background:#c0c0c0;height:15px;"><span></span></div>
</div>
<div class="row" style="top:504px;background:#e6e0ff">
<div class="rh"><span>5</span></div>
<div class="c " style="left:65px;width:95px;background:#c0c0c0;height:15px;"><span></span></div>
<div class="c " style="left:161px;width:107px;"><span></span></div>
<i class="vs" style="left:268px"></i>
<div class="c " style="left:269px;width:85px;background:#c0c0c0;height:15px;"><span></span></div>
<div class="c " style="left:355px;width:157px;"><span>APC,CIG,AB: solo accesso quiz</span></div>
<i class="vs" style="left:512px"></i>
<div class="c " style="left:513px;width:80px;"><span>COCCHI</span></div>
<i class="vs" style="left:593px"></i>
<div class="c " style="left:594px;width:140px;"><span>ELENA</span></div>
<i class="vs" style="left:734px"></i>
<div class="c r" style="left:735px;width:63px;"><span>83,24€</span></div>
<i class="vs" style="left:798px"></i>
<div class="c " style="left:799px;width:113px;background:#c0c0c0;height:15px;"><span></span></div>
<div class="c " style="left:913px;width:23px;background:#c0c0c0;height:15px;"><span></span></div>
</div>
<div class="row" style="top:520px;background:#fafaff">
<div class="rh"><span>18</span></div>
<div class="c " style="left:65px;width:95px;background:#c0c0c0;height:15px;"><span></span></div>
<div class="c " style="left:161px;width:107px;"><span></span></div>
<i class="vs" style="left:268px"></i>
<div class="c " style="left:269px;width:85px;background:#c0c0c0;height:15px;"><span></span></div>
<div class="c " style="left:355px;width:157px;"><span>APC,CIG,AB: solo accesso quiz</span></div>
<i class="vs" style="left:512px"></i>
<div class="c " style="left:513px;width:80px;"><span>MORELLI</span></div>
<i class="vs" style="left:593px"></i>
<div class="c " style="left:594px;width:140px;"><span>ELENA</span></div>
<i class="vs" style="left:734px"></i>
<div class="c r" style="left:735px;width:63px;"><span></span></div>
<i class="vs" style="left:798px"></i>
<div class="c " style="left:799px;width:113px;background:#c0c0c0;height:15px;"><span></span></div>
<div class="c " style="left:913px;width:23px;background:#c0c0c0;height:15px;"><span></span></div>
</div>
<div class="row" style="top:536px;background:#e6e0ff">
<div class="rh"><span>6</span></div>
<div class="c " style="left:65px;width:95px;background:#c0c0c0;height:15px;"><span></span></div>
<div class="c " style="left:161px;width:107px;"><span></span></div>
<i class="vs" style="left:268px"></i>
<div class="c " style="left:269px;width:85px;background:#c0c0c0;height:15px;"><span></span></div>
<div class="c " style="left:355px;width:157px;"><span>APC,CIG,AB: solo accesso quiz</span></div>
<i class="vs" style="left:512px"></i>
<div class="c " style="left:513px;width:80px;"><span>GHERARDI</span></div>
<i class="vs" style="left:593px"></i>
<div class="c " style="left:594px;width:140px;"><span>MATTIA</span></div>
<i class="vs" style="left:734px"></i>
<div class="c r" style="left:735px;width:63px;"><span></span></div>
<i class="vs" style="left:798px"></i>
<div class="c " style="left:799px;width:113px;background:#c0c0c0;height:15px;"><span></span></div>
<div class="c " style="left:913px;width:23px;background:#c0c0c0;height:15px;"><span></span></div>
</div>
<div class="row" style="top:552px;background:#fafaff">
<div class="rh"><span>8</span></div>
<div class="c " style="left:65px;width:95px;background:#c0c0c0;height:15px;"><span></span></div>
<div class="c " style="left:161px;width:107px;"><span></span></div>
<i class="vs" style="left:268px"></i>
<div class="c " style="left:269px;width:85px;background:#c0c0c0;height:15px;"><span></span></div>
<div class="c " style="left:355px;width:157px;"><span>APC,CIG,AB: solo accesso quiz</span></div>
<i class="vs" style="left:512px"></i>
<div class="c " style="left:513px;width:80px;"><span>TUGNOLI</span></div>
<i class="vs" style="left:593px"></i>
<div class="c " style="left:594px;width:140px;"><span>DANIELE</span></div>
<i class="vs" style="left:734px"></i>
<div class="c r" style="left:735px;width:63px;"><span>99,24€</span></div>
<i class="vs" style="left:798px"></i>
<div class="c " style="left:799px;width:113px;background:#c0c0c0;height:15px;"><span></span></div>
<div class="c " style="left:913px;width:23px;background:#c0c0c0;height:15px;"><span></span></div>
</div>
<div class="row" style="top:568px;background:#e6e0ff">
<div class="rh"><span>16</span></div>
<div class="c " style="left:65px;width:95px;background:#c0c0c0;height:15px;"><span></span></div>
<div class="c " style="left:161px;width:107px;"><span></span></div>
<i class="vs" style="left:268px"></i>
<div class="c " style="left:269px;width:85px;background:#c0c0c0;height:15px;"><span></span></div>
<div class="c " style="left:355px;width:157px;"><span>APC,CIG,AB: solo accesso quiz</span></div>
<i class="vs" style="left:512px"></i>
<div class="c " style="left:513px;width:80px;"><span>ZAMBONI</span></div>
<i class="vs" style="left:593px"></i>
<div class="c " style="left:594px;width:140px;"><span>PATRIZIA</span></div>
<i class="vs" style="left:734px"></i>
<div class="c r" style="left:735px;width:63px;"><span></span></div>
<i class="vs" style="left:798px"></i>
<div class="c " style="left:799px;width:113px;background:#c0c0c0;height:15px;"><span></span></div>
<div class="c " style="left:913px;width:23px;background:#c0c0c0;height:15px;"><span></span></div>
</div>
<div class="row" style="top:584px;background:#fafaff">
<div class="rh"><span>12</span></div>
<div class="c " style="left:65px;width:95px;background:#c0c0c0;height:15px;"><span></span></div>
<div class="c " style="left:161px;width:107px;"><span></span></div>
<i class="vs" style="left:268px"></i>
<div class="c " style="left:269px;width:85px;background:#c0c0c0;height:15px;"><span></span></div>
<div class="c " style="left:355px;width:157px;"><span>APC,CIG,AB: solo accesso quiz</span></div>
<i class="vs" style="left:512px"></i>
<div class="c " style="left:513px;width:80px;"><span>MACCAFERRI</span></div>
<i class="vs" style="left:593px"></i>
<div class="c " style="left:594px;width:140px;"><span>PAOLA</span></div>
<i class="vs" style="left:734px"></i>
<div class="c r" style="left:735px;width:63px;"><span></span></div>
<i class="vs" style="left:798px"></i>
<div class="c " style="left:799px;width:113px;background:#c0c0c0;height:15px;"><span></span></div>
<div class="c " style="left:913px;width:23px;background:#c0c0c0;height:15px;"><span></span></div>
</div>
<div class="row" style="top:600px;background:#e6e0ff">
<div class="rh"><span>15</span></div>
<div class="c " style="left:65px;width:95px;background:#c0c0c0;height:15px;"><span></span></div>
<div class="c " style="left:161px;width:107px;"><span></span></div>
<i class="vs" style="left:268px"></i>
<div class="c " style="left:269px;width:85px;background:#c0c0c0;height:15px;"><span></span></div>
<div class="c " style="left:355px;width:157px;"><span>APC,CIG,AB: solo accesso quiz</span></div>
<i class="vs" style="left:512px"></i>
<div class="c " style="left:513px;width:80px;"><span>BASSI</span></div>
<i class="vs" style="left:593px"></i>
<div class="c " style="left:594px;width:140px;"><span>PATRIZIA</span></div>
<i class="vs" style="left:734px"></i>
<div class="c r" style="left:735px;width:63px;"><span></span></div>
<i class="vs" style="left:798px"></i>
<div class="c " style="left:799px;width:113px;background:#c0c0c0;height:15px;"><span></span></div>
<div class="c " style="left:913px;width:23px;background:#c0c0c0;height:15px;"><span></span></div>
</div>
<div class="row" style="top:616px;background:#fafaff">
<div class="rh"><span>19</span></div>
<div class="c " style="left:65px;width:95px;background:#c0c0c0;height:15px;"><span></span></div>
<div class="c " style="left:161px;width:107px;"><span>0026</span></div>
<i class="vs" style="left:268px"></i>
<div class="c " style="left:269px;width:85px;"><span>A11.00016</span></div>
<i class="vs" style="left:354px"></i>
<div class="c " style="left:355px;width:157px;"><span>GA: rilascio</span></div>
<i class="vs" style="left:512px"></i>
<div class="c " style="left:513px;width:80px;"><span>ZANASI</span></div>
<i class="vs" style="left:593px"></i>
<div class="c " style="left:594px;width:140px;"><span>LUCA</span></div>
<i class="vs" style="left:734px"></i>
<div class="c r" style="left:735px;width:63px;"><span></span></div>
<i class="vs" style="left:798px"></i>
<div class="c " style="left:799px;width:113px;"><span>Autorizzazione alla GA</span></div>
<i class="vs" style="left:912px"></i>
<div class="c " style="left:913px;width:23px;background:#ffff00;height:15px;"><span>Cors</span></div>
</div>
</div></div>
<!-- scrollbar -->
<div class="abs" style="left:147px;top:770px;width:935px;height:17px;background:linear-gradient(180deg,#f3f1ec 0,#fefefb 40%,#fff 100%)"></div>
<div class="abs" style="left:147px;top:771px;width:16px;height:16px;background:linear-gradient(180deg,#d4defb 0,#c3d1f8 50%,#b2c4f4 100%);border:1px solid #fff;border-radius:3px;box-shadow:0 0 0 1px #9db4ee inset"><svg width="14" height="14" viewBox="0 0 14 14" style="position:absolute;left:0;top:0"><path d="M9 3L5 7L9 11" fill="none" stroke="#4d6185" stroke-width="2"/></svg></div>
<div class="abs" style="left:1065px;top:771px;width:16px;height:16px;background:linear-gradient(180deg,#d4defb 0,#c3d1f8 50%,#b2c4f4 100%);border:1px solid #fff;border-radius:3px;box-shadow:0 0 0 1px #9db4ee inset"><svg width="14" height="14" viewBox="0 0 14 14" style="position:absolute;left:0;top:0"><path d="M5 3L9 7L5 11" fill="none" stroke="#4d6185" stroke-width="2"/></svg></div>
<div class="abs" style="left:213px;top:771px;width:17px;height:16px;background:linear-gradient(180deg,#d4defb 0,#c3d1f8 50%,#b2c4f4 100%);border:1px solid #fff;border-radius:3px;box-shadow:0 0 0 1px #9db4ee inset"><div style="position:absolute;left:4px;top:4px;width:8px;height:7px;background:repeating-linear-gradient(90deg,#eef4fe 0,#eef4fe 1px,#8ca6e6 1px,#8ca6e6 2px)"></div></div>

<!-- dropdown menu -->
<div class="abs" style="left:55px;top:49px;width:339px;height:315px;background:#fff;border:1px solid #aca899;box-shadow:2px 2px 2px rgba(0,0,0,.45)"></div>
<div class="abs mt" style="left:74px;top:52px;color:#000">Modifica</div>
<div class="abs mt" style="left:74px;top:69px;color:#000">Nuova</div>
<div class="abs mt" style="left:331px;top:69px;color:#000">Ins</div>
<div class="abs mt" style="left:74px;top:86px;color:#000">Rimuovi</div>
<div class="abs mt" style="left:331px;top:86px;color:#000">Del</div>
<div class="abs mt" style="left:74px;top:112px;color:#aca899">Rimuovi tutte</div>
<div class="abs mt" style="left:331px;top:112px;color:#aca899">Ctrl+Del</div>
<div class="abs mt" style="left:74px;top:138px;color:#000">Acquisisci firma</div>
<div class="abs mt" style="left:74px;top:155px;color:#000">Registrazione patente</div>
<div class="abs" style="left:58px;top:181px;width:333px;height:17px;background:#316ac5"></div>
<div class="abs mt" style="left:74px;top:181px;color:#fff">Nuovo prenota PATENTE -&gt; Cambia azione richiesta</div>
<div class="abs mt" style="left:74px;top:198px;color:#000">Disco -&gt; Nuovo prenota PATENTE</div>
<div class="abs mt" style="left:331px;top:198px;color:#000">Ctrl+P</div>
<div class="abs mt" style="left:74px;top:215px;color:#000">Disco -&gt; Prenota CQC</div>
<div class="abs mt" style="left:74px;top:232px;color:#000">Disco -&gt; Prenota PATENTINO</div>
<div class="abs mt" style="left:331px;top:232px;color:#000">Ctrl+T</div>
<div class="abs mt" style="left:74px;top:249px;color:#000">Disco -&gt; Prenota FOGLIO ROSA</div>
<div class="abs mt" style="left:74px;top:266px;color:#000">Aggiorna numeri statini prenotati</div>
<div class="abs mt" style="left:74px;top:292px;color:#000">Invia messaggi e comunicazioni</div>
<div class="abs mt" style="left:74px;top:318px;color:#000">Aggiorna statini su Prenota Esami</div>
<div class="abs mt" style="left:74px;top:344px;color:#000">Cambia tipo pratica</div>
<div class="abs" style="left:59px;top:106px;width:331px;height:1px;background:#aca899"></div>
<div class="abs" style="left:59px;top:132px;width:331px;height:1px;background:#aca899"></div>
<div class="abs" style="left:59px;top:175px;width:331px;height:1px;background:#aca899"></div>
<div class="abs" style="left:59px;top:286px;width:331px;height:1px;background:#aca899"></div>
<div class="abs" style="left:59px;top:312px;width:331px;height:1px;background:#aca899"></div>
<div class="abs" style="left:59px;top:338px;width:331px;height:1px;background:#aca899"></div>
</body></html>
